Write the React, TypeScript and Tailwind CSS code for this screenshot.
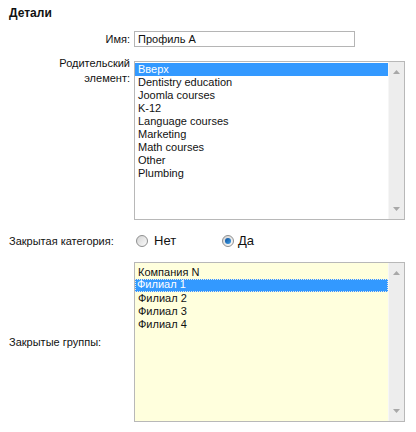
import React from "react";

function ScrollBar() {
  return (
    <div className="w-[16px] shrink-0 bg-[#ededed] border-l border-[#f6f6f6] flex flex-col items-center justify-between py-[8px]">
      <svg width="7" height="4" viewBox="0 0 7 4"><path d="M3.5 0 L7 4 L0 4 Z" fill="#a8a8a8" /></svg>
      <svg width="7" height="4" viewBox="0 0 7 4"><path d="M0 0 L7 0 L3.5 4 Z" fill="#a8a8a8" /></svg>
    </div>
  );
}

function Radio({ checked }: { checked?: boolean }) {
  return (
    <span className="relative inline-flex w-[12px] h-[12px] rounded-full border border-[#8e8f8f] bg-gradient-to-br from-[#d4d4d4] to-[#fbfbfb] items-center justify-center">
      {checked && (
        <span className="w-[6px] h-[6px] rounded-full bg-gradient-to-br from-[#0b4f9c] to-[#3fa0e8]" />
      )}
    </span>
  );
}

export default function App() {
  const parents = [
    "Dentistry education",
    "Joomla courses",
    "K-12",
    "Language courses",
    "Marketing",
    "Math courses",
    "Other",
    "Plumbing",
  ];
  const groups = ["Филиал 2", "Филиал 3", "Филиал 4"];
  return (
    <div
      className="w-[416px] h-[432px] bg-white text-[11px] text-[#111] pl-[9px]"
      style={{ fontFamily: '"Liberation Sans", Arial, sans-serif' }}
    >
      <div className="pt-[5px] h-[29px] text-[12px] font-bold leading-[16px]">Детали</div>

      <div className="flex items-center h-[17px] mt-[1px]">
        <div className="w-[125px] text-right pr-[4px] leading-[14px]">Имя:</div>
        <div className="w-[221px] h-[16px] border border-[#b5b5b5] pl-[3px] leading-[14px] text-[11px]">Профиль А</div>
      </div>

      <div className="flex mt-[14px]">
        <div className="w-[125px] text-right pr-[4px] leading-[15px] -mt-[5px]">
          Родительский
          <br />
          элемент:
        </div>
        <div className="w-[271px] h-[159px] border border-[#b8b8b8] flex">
          <div className="flex-1 pt-[1px] leading-[13px]">
            <div className="bg-[#3399ff] text-white pl-[3px] h-[13px] leading-[13px]">Вверх</div>
            {parents.map((p) => (
              <div key={p} className="pl-[3px] h-[13px]">{p}</div>
            ))}
          </div>
          <ScrollBar />
        </div>
      </div>

      <div className="flex items-center h-[20px] mt-[11px]">
        <div className="w-[127px] leading-[14px]">Закрытая категория:</div>
        <label className="flex items-center gap-[6px] w-[86px] text-[13px]">
          <Radio />
          <span>Нет</span>
        </label>
        <label className="flex items-center gap-[4px] text-[13px]">
          <Radio checked />
          <span>Да</span>
        </label>
      </div>

      <div className="flex items-center mt-[11px]">
        <div className="w-[125px] leading-[14px]">Закрытые группы:</div>
        <div className="w-[271px] h-[160px] border border-[#b8b8b8] bg-[#ffffdd] flex">
          <div className="flex-1 pt-[3px] leading-[13px]">
            <div className="pl-[3px] h-[13px]">Компания N</div>
            <div className="bg-[#3399ff] text-white pl-[2px] h-[13px] leading-[11px] outline outline-1 outline-dotted outline-offset-[-1px] outline-[#e8e8e8]">
              Филиал 1
            </div>
            {groups.map((g) => (
              <div key={g} className="pl-[3px] h-[13px]">{g}</div>
            ))}
          </div>
          <ScrollBar />
        </div>
      </div>
    </div>
  );
}
